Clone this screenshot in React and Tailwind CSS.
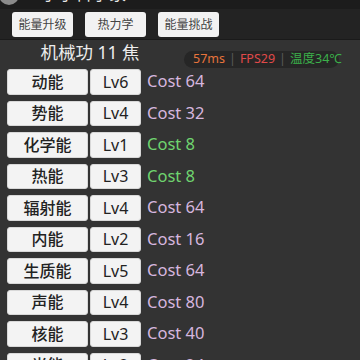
import React from "react";

const rows = [
  { name: "动能", lv: 6, cost: 64, ok: false },
  { name: "势能", lv: 4, cost: 32, ok: false },
  { name: "化学能", lv: 1, cost: 8, ok: true },
  { name: "热能", lv: 3, cost: 8, ok: true },
  { name: "辐射能", lv: 4, cost: 64, ok: false },
  { name: "内能", lv: 2, cost: 16, ok: false },
  { name: "生质能", lv: 5, cost: 64, ok: false },
  { name: "声能", lv: 4, cost: 80, ok: false },
  { name: "核能", lv: 3, cost: 40, ok: false },
  { name: "光能", lv: 2, cost: 24, ok: false },
];

const font = { fontFamily: '"Noto Sans", "Noto Sans CJK SC", sans-serif' };

export default function App() {
  return (
    <div className="w-[360px] h-[360px] overflow-hidden bg-[#333333] flex flex-col" style={font}>
      {/* header (cut off) */}
      <div className="h-[9px] shrink-0 bg-[#1c1c1c] overflow-hidden flex items-end">
        <div className="flex items-end gap-[22px] translate-y-[-4px]">
          <div className="w-[20px] h-[20px] rounded-full bg-[#8a8a8a] shrink-0 -ml-[1px]" />
          <div className="text-[17px] leading-[20px] text-[#e8e8e8] whitespace-nowrap translate-y-[-1px]">
            小小科学家 2375 · 53
          </div>
        </div>
      </div>
      {/* tabs */}
      <div className="h-[31px] shrink-0 bg-[#232323] border-b border-[#1a1a1a] flex gap-3 px-3 pt-[3px]">
        {["能量升级", "热力学", "能量挑战"].map((t) => (
          <div
            key={t}
            className="w-[61px] h-[25px] bg-[#f2f2f2] rounded-[3px] flex items-center justify-center text-[12px] text-[#444]"
          >
            {t}
          </div>
        ))}
      </div>
      {/* title row */}
      <div className="h-[29px] shrink-0 flex items-center">
        <div className="w-[180px] text-center text-[17.5px] text-[#ececec] leading-none -mt-[4px]">
          机械功 11 焦
        </div>
        <div className="ml-[4px] mt-[9px] h-[17px] w-[155px] rounded-full bg-[#262626] flex items-center pl-[8px] text-[12.5px] leading-none whitespace-nowrap">
          <svg width="9" height="9" viewBox="0 0 9 9" className="mr-[1px] mb-[1px]">
            <rect x="0" y="6" width="2" height="3" fill="#e8743c" />
            <rect x="3.5" y="3" width="2" height="6" fill="#e8743c" />
            <rect x="7" y="0" width="2" height="9" fill="#e8743c" />
          </svg>
          <span className="text-[#e8743c]">57ms</span>
          <span className="text-[#5a5a5a] mx-[4px]">|</span>
          <span className="text-[#e04a4a]">FPS29</span>
          <span className="text-[#5a5a5a] mx-[4px]">|</span>
          <span className="text-[#3cb04a]">温度34℃</span>
        </div>
      </div>
      {/* rows */}
      <div className="flex flex-col gap-[6px] pl-[7px]">
        {rows.map((r) => (
          <div key={r.name} className="flex items-center h-[25.5px] shrink-0">
            <div className="w-[81px] h-full bg-[#f3f3f3] rounded-[3px] border border-[#d8d8d8] flex items-center justify-center text-[16px] text-[#222] font-medium">
              {r.name}
            </div>
            <div className="ml-[2px] w-[51px] h-full bg-[#f3f3f3] rounded-[3px] border border-[#d8d8d8] flex items-center justify-center text-[16px] text-[#222]">
              Lv{r.lv}
            </div>
            <div
              className={
                "ml-[6px] text-[16.5px] " + (r.ok ? "text-[#6fd36f]" : "text-[#d6b6df]")
              }
            >
              Cost {r.cost}
            </div>
          </div>
        ))}
      </div>
    </div>
  );
}
